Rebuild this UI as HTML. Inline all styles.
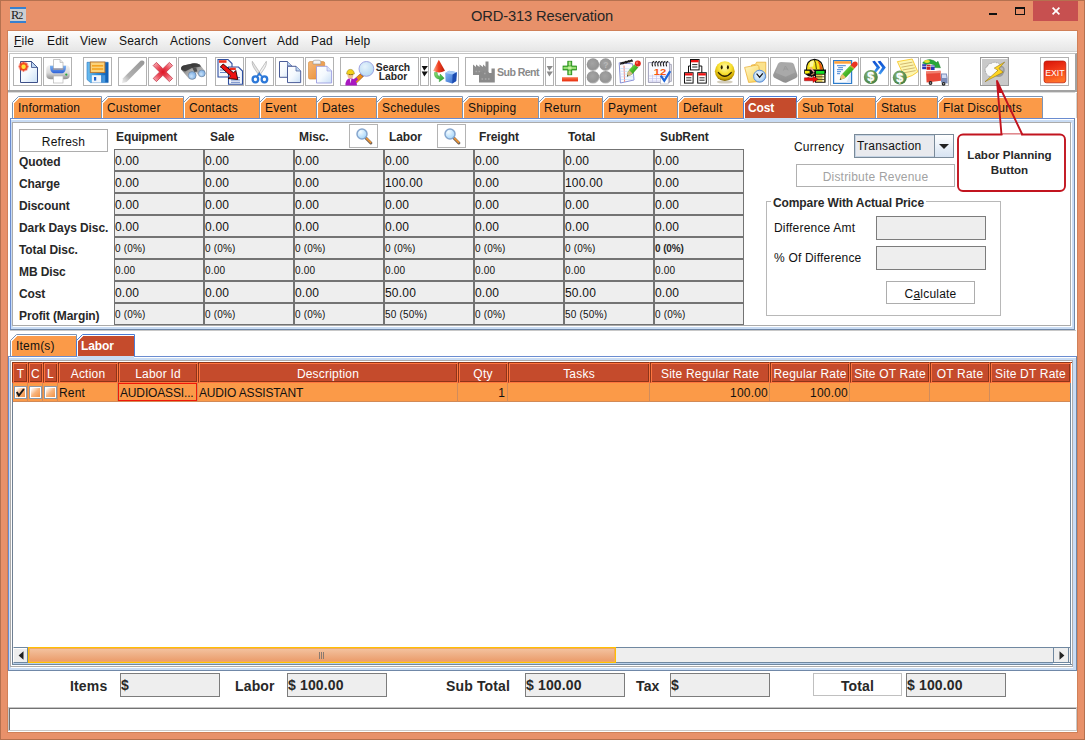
<!DOCTYPE html><html><head><meta charset="utf-8"><title>ORD-313 Reservation</title><style>
*{box-sizing:border-box;margin:0;padding:0}
html,body{width:1085px;height:740px;overflow:hidden}
body{position:relative;background:#E8916A;font-family:"Liberation Sans",sans-serif;font-size:12px;color:#111}
.a{position:absolute}
.t{position:absolute;white-space:nowrap;line-height:14px;letter-spacing:0.2px}
.t.b,.b{font-weight:bold;letter-spacing:-0.1px;color:#282828}
.tb{position:absolute;width:29px;height:29px;border:1px solid #B2B2B2;background:#fff;top:57px}
.cell{position:absolute;background:#EEEEEE;border:1px solid #737373;width:90px;height:22px}
.fld{position:absolute;background:#EEEEEE;border:1px solid #7C7C7C}
.hd{position:absolute;top:362px;height:21px;background:#C54B2C;color:#fff;text-align:center;line-height:14px;padding-top:4px;border:1px solid;border-color:#8E3519 #FF7640 #FF7640 #8E3519;box-shadow:inset 1px 1px 0 #FF7640, inset -1px -1px 0 #8E3519;white-space:nowrap;overflow:hidden;letter-spacing:0.2px}
</style></head><body>
<div class="a" style="left:0;top:0;width:1085px;height:740px;border:1px solid #B5714F"></div>
<div class="a" style="left:10px;top:7px;width:16px;height:16px;background:#CBCED2;border-top:2px solid #3680D0;border-bottom:2px solid #3680D0"></div>
<div class="t" style="left:11px;top:8px;font-family:'Liberation Serif',serif;font-size:12.5px;line-height:14px;color:#1a1a1a;letter-spacing:0">R<span style="font-size:10px;position:relative;top:0px;margin-left:-1px">2</span></div>
<div class="t" style="left:471px;top:6px;font-size:14.7px;line-height:20px;color:#262626;letter-spacing:-0.13px">ORD-313 Reservation</div>
<div class="a" style="left:989px;top:13px;width:8px;height:2px;background:#111"></div>
<div class="a" style="left:1015px;top:7px;width:10px;height:8px;border:1px solid #111;border-top-width:2px"></div>
<div class="a" style="left:1033px;top:1px;width:45px;height:20px;background:#C75050"></div>
<svg class="a" style="left:1051px;top:6px" width="10" height="10" viewBox="0 0 10 10"><path d="M1.6 1.6 L8.4 8.4 M8.4 1.6 L1.6 8.4" stroke="#fff" stroke-width="1.7" fill="none"/></svg>
<div class="a" style="left:7px;top:30px;width:1071px;height:703px;background:#fff;border:1px solid #D08058"></div>
<div class="a" style="left:8px;top:31px;width:1069px;height:21px;background:linear-gradient(#fdfdfd,#e6e6e6);border-bottom:1px solid #d0d0d0"></div>
<div class="t" style="left:14px;top:34px;font-size:12px"><u>F</u>ile</div>
<div class="t" style="left:47px;top:34px;font-size:12px">Edit</div>
<div class="t" style="left:80px;top:34px;font-size:12px">View</div>
<div class="t" style="left:119px;top:34px;font-size:12px">Search</div>
<div class="t" style="left:170px;top:34px;font-size:12px">Actions</div>
<div class="t" style="left:223px;top:34px;font-size:12px">Convert</div>
<div class="t" style="left:277px;top:34px;font-size:12px">Add</div>
<div class="t" style="left:311px;top:34px;font-size:12px">Pad</div>
<div class="t" style="left:345px;top:34px;font-size:12px">Help</div>
<div class="a" style="left:9px;top:53px;width:1068px;height:39px;border:1px solid #C4C4C4;border-bottom:2px solid #A2A2A2;border-right:2px solid #A2A2A2;background:#fff"></div>
<div class="a" style="left:8px;top:90px;width:2px;height:1px;background:#A2A2A2"></div>
<div class="a" style="left:8px;top:91px;width:2px;height:1px;background:#A2A2A2"></div>
<div class="a" style="left:8px;top:92px;width:1067px;height:1px;background:#DADADA"></div>
<div class="a" style="left:1076px;top:93px;width:1px;height:25px;background:#D4D4D4"></div>
<div class="tb" style="left:13px;width:29px"></div>
<div class="tb" style="left:43px;width:29px"></div>
<div class="tb" style="left:83px;width:29px"></div>
<div class="tb" style="left:118px;width:29px"></div>
<div class="tb" style="left:148px;width:29px"></div>
<div class="tb" style="left:178px;width:29px"></div>
<div class="tb" style="left:215px;width:29px"></div>
<div class="tb" style="left:245px;width:29px"></div>
<div class="tb" style="left:275px;width:29px"></div>
<div class="tb" style="left:305px;width:29px"></div>
<div class="tb" style="left:340px;width:79px"></div>
<div class="tb" style="left:420px;width:9px"></div>
<div class="tb" style="left:430px;width:29px"></div>
<div class="tb" style="left:465px;width:79px"></div>
<div class="tb" style="left:545px;width:9px"></div>
<div class="tb" style="left:555px;width:29px"></div>
<div class="tb" style="left:585px;width:29px"></div>
<div class="tb" style="left:615px;width:29px"></div>
<div class="tb" style="left:645px;width:29px"></div>
<div class="tb" style="left:680px;width:29px"></div>
<div class="tb" style="left:710px;width:29px"></div>
<div class="tb" style="left:740px;width:29px"></div>
<div class="tb" style="left:770px;width:29px"></div>
<div class="tb" style="left:800px;width:29px"></div>
<div class="tb" style="left:830px;width:29px"></div>
<div class="tb" style="left:860px;width:29px"></div>
<div class="tb" style="left:890px;width:29px"></div>
<div class="tb" style="left:920px;width:29px"></div>
<div class="tb" style="left:1040px;width:29px"></div>
<div class="tb" style="left:980px;background:#C9C9C9;border-color:#9A9A9A"></div>
<svg width="0" height="0" style="position:absolute"><defs>
<linearGradient id="gpage" x1="0" y1="0" x2="1" y2="1"><stop offset="0" stop-color="#fff"/><stop offset="0.5" stop-color="#F4F9FE"/><stop offset="1" stop-color="#C9DFF6"/></linearGradient>
<radialGradient id="gsun"><stop offset="0" stop-color="#FFF36A"/><stop offset="0.35" stop-color="#FFC21E"/><stop offset="0.6" stop-color="#F2452A"/><stop offset="1" stop-color="#F2452A" stop-opacity="0"/></radialGradient>
<linearGradient id="gprn" x1="0" y1="0" x2="0" y2="1"><stop offset="0" stop-color="#F4F4F4"/><stop offset="0.55" stop-color="#D9D9D9"/><stop offset="1" stop-color="#8E8E8E"/></linearGradient>
<linearGradient id="gprb" x1="0" y1="0" x2="0" y2="1"><stop offset="0" stop-color="#7DB4F2"/><stop offset="1" stop-color="#2F62D8"/></linearGradient>
<linearGradient id="gflop" x1="0" y1="0" x2="1" y2="0"><stop offset="0" stop-color="#6FC0F0"/><stop offset="0.5" stop-color="#2A8AD8"/><stop offset="1" stop-color="#0F5CB0"/></linearGradient>
<linearGradient id="gpen" x1="0" y1="1" x2="1" y2="0"><stop offset="0" stop-color="#C8C8C8" stop-opacity="0.3"/><stop offset="0.3" stop-color="#B0B0B0"/><stop offset="1" stop-color="#969696"/></linearGradient>
<radialGradient id="gx" cx="0.5" cy="0.5" r="0.6"><stop offset="0" stop-color="#DC1424"/><stop offset="0.5" stop-color="#EC4C5A"/><stop offset="1" stop-color="#F6A4AC"/></radialGradient>
<radialGradient id="glens" cx="0.4" cy="0.6" r="0.7"><stop offset="0" stop-color="#C8E2FA"/><stop offset="1" stop-color="#6FA4E0"/></radialGradient>
<linearGradient id="gbino" x1="0" y1="0" x2="1" y2="1"><stop offset="0" stop-color="#484848"/><stop offset="0.45" stop-color="#A0A0A0"/><stop offset="1" stop-color="#E4E4E4"/></linearGradient>
<linearGradient id="gclip" x1="0" y1="0" x2="1" y2="1"><stop offset="0" stop-color="#F6B878"/><stop offset="1" stop-color="#E88A30"/></linearGradient>
<radialGradient id="gring"><stop offset="0.45" stop-color="#fff" stop-opacity="0"/><stop offset="0.5" stop-color="#5FA4EC"/><stop offset="1" stop-color="#1C62C4"/></radialGradient>
</defs></svg>
<svg class="a" style="left:13px;top:57px" width="29" height="29" viewBox="13 57 29 29">
<path d="M20.5 61.5 H31.5 L37.5 67.5 V82.5 H20.5 Z" fill="url(#gpage)" stroke="#3C4F88" stroke-width="1"/>
<path d="M31.5 61.5 V67.5 H37.5 Z" fill="#BCD6F2" stroke="#3C4F88" stroke-width="0.8"/>
<circle cx="23.5" cy="66.5" r="5.6" fill="url(#gsun)"/>
<path d="M23.6 61.4 L24.6 64.4 L27.6 63 L26 65.8 L29 66.8 L26 67.8 L27.4 70.6 L24.6 69.2 L23.6 72.2 L22.6 69.2 L19.8 70.6 L21.2 67.8 L18.2 66.8 L21.2 65.8 L19.6 63 L22.6 64.4 Z" fill="#F0401C" opacity="0.85"/>
<circle cx="23.6" cy="66.8" r="2.2" fill="#FFE23C"/>
</svg>
<svg class="a" style="left:43px;top:57px" width="29" height="29" viewBox="43 57 29 29">
<path d="M46.3 69 Q46.3 65 51 65 H65 Q69.8 65 69.8 69 V75 Q69.8 79.3 65 79.3 H51 Q46.3 79.3 46.3 75 Z" fill="url(#gprn)"/>
<path d="M50 65.8 H66 Q66 73 62.5 73.2 H53.5 Q50 73 50 65.8 Z" fill="url(#gprb)"/>
<path d="M53.5 59.5 H60 L63 62.5 V69.5 H53.5 Z" fill="#fff" stroke="#B0B0B0" stroke-width="0.7"/>
<path d="M60 59.5 V62.5 H63" fill="#E8E8E8" stroke="#B0B0B0" stroke-width="0.6"/>
<rect x="53" y="68.3" width="10.5" height="1.4" fill="#8A8AA0"/>
<rect x="53.5" y="76" width="9.5" height="7" fill="#fff" stroke="#B8B8B8" stroke-width="0.7"/>
<circle cx="66.3" cy="74.6" r="1.1" fill="#24A83C"/>
</svg>
<svg class="a" style="left:83px;top:57px" width="29" height="29" viewBox="83 57 29 29">
<path d="M87 62.3 H108.2 V82.6 H90.5 L87 79.5 Z" fill="url(#gflop)" stroke="#1E6EC0" stroke-width="0.6"/>
<rect x="90.3" y="62" width="14.6" height="10.6" fill="#FBD27A" stroke="#B8742C" stroke-width="0.9"/>
<rect x="92" y="65" width="11.2" height="1.6" fill="#F4A320"/>
<rect x="92" y="68.2" width="11.2" height="1.6" fill="#F4A320"/>
<rect x="91.8" y="75.2" width="9.4" height="7.4" fill="#F2F6FB"/>
<rect x="94" y="77" width="2.2" height="3.6" fill="#1E5FC8"/>
<rect x="102.2" y="75.2" width="3" height="7.4" fill="#58A8E8" opacity="0.7"/>
</svg>
<svg class="a" style="left:118px;top:57px" width="29" height="29" viewBox="118 57 29 29">
<path d="M122 83.2 L123 78.2 L140.6 60.8 Q142.8 59.8 144.2 61.6 Q145 63.2 143.8 64.6 L126.6 82 Z" fill="url(#gpen)"/>
</svg>
<svg class="a" style="left:148px;top:57px" width="29" height="29" viewBox="148 57 29 29">
<path d="M156.4 62.4 L162.9 68.7 L169.4 62.4 L172.6 65.6 L166.2 72 L172.6 78.4 L169.4 81.6 L162.9 75.3 L156.4 81.6 L153.2 78.4 L159.6 72 L153.2 65.6 Z" fill="url(#gx)" stroke="#C43444" stroke-width="0.8" stroke-linejoin="round"/>
</svg>
<svg class="a" style="left:178px;top:57px" width="29" height="29" viewBox="178 57 29 29">
<path d="M181.2 69.5 Q180.6 66.6 183.6 65.6 L190 64 Q192.4 64 193.6 66 L196.4 74 Q196.8 79.6 192.4 79.8 Q189 80 187.4 77 Z" fill="url(#gbino)"/>
<path d="M190 64.6 Q193 62.8 197 63.6 L199.6 64.6 L205 71 Q206.4 75.6 203 76.8 Q199.4 77.6 197.8 74.6 Z" fill="url(#gbino)"/>
<path d="M181.2 69.5 Q180.6 66.6 183.6 65.6 L190 64 Q193 62.8 197 63.6 L199.6 64.6 L201 66.4 L192 68 L185 71.6 Z" fill="#303030" opacity="0.8"/>
<path d="M192.4 68.2 L196.2 67.4 L197.4 71.4 L194.4 72 Z" fill="#505050"/>
<circle cx="192.2" cy="75.4" r="3.9" fill="url(#glens)" stroke="#6A7A90" stroke-width="0.6"/>
<circle cx="201.8" cy="73.4" r="3.4" fill="url(#glens)" stroke="#6A7A90" stroke-width="0.6"/>
</svg>
<svg class="a" style="left:215px;top:57px" width="29" height="29" viewBox="215 57 29 29">
<path d="M218 59.5 H228 L232 63.5 V77 H218 Z" fill="#F4F8FE" stroke="#2F4FA0" stroke-width="1.1"/>
<rect x="219" y="60.2" width="7.5" height="2.6" fill="#F0301C"/>
<path d="M220 67.5 H229 M220 70 H229 M220 72.5 H226" stroke="#5A78C0" stroke-width="0.9"/>
<path d="M228.5 67 H238.5 L242.5 71 V84.2 H228.5 Z" fill="#F4F8FE" stroke="#2F4FA0" stroke-width="1.1"/>
<rect x="229.3" y="67.7" width="6.5" height="2.4" fill="#F0301C"/>
<path d="M231 77.5 H240 M231 80 H240 M231 82.3 H240" stroke="#5A78C0" stroke-width="0.9"/>
<path d="M220.5 66.8 L223.2 64 L233.5 72.8 L235.8 70.5 L237.8 79.5 L228 78.5 L230.6 76 Z" fill="#EE1010" stroke="#200000" stroke-width="0.9" stroke-linejoin="round"/>
</svg>
<svg class="a" style="left:245px;top:57px" width="29" height="29" viewBox="245 57 29 29">
<path d="M252.3 61.3 Q251.5 65 256 71 L259.5 76 L261 74.5 Z" fill="#E4E4E4" stroke="#A0A0A0" stroke-width="0.6"/>
<path d="M266.3 61.3 Q267.2 65 262.7 71 L259.2 76 L257.7 74.5 Z" fill="#F2F2F2" stroke="#A0A0A0" stroke-width="0.6"/>
<circle cx="259.4" cy="73" r="0.8" fill="#707070"/>
<ellipse cx="255.4" cy="79.3" rx="2.8" ry="3" fill="none" stroke="#2C78D8" stroke-width="2.3"/>
<ellipse cx="264.4" cy="79.3" rx="2.8" ry="3" fill="none" stroke="#2C78D8" stroke-width="2.3"/>
<path d="M257 76.5 L259.3 73.5 L261.8 76.5" fill="none" stroke="#2C78D8" stroke-width="1.6"/>
</svg>
<svg class="a" style="left:275px;top:57px" width="29" height="29" viewBox="275 57 29 29">
<path d="M279.5 61.5 H287.5 L292 66 V77.3 H279.5 Z" fill="url(#gpage)" stroke="#4A5C98" stroke-width="1"/>
<path d="M287.5 61.5 V66 H292" fill="#BCD6F2" stroke="#4A5C98" stroke-width="0.7"/>
<path d="M287.5 66.3 H296 L300.7 71 V82.6 H287.5 Z" fill="url(#gpage)" stroke="#4A5C98" stroke-width="1"/>
<path d="M296 66.3 V71 H300.7" fill="#BCD6F2" stroke="#4A5C98" stroke-width="0.7"/>
</svg>
<svg class="a" style="left:305px;top:57px" width="29" height="29" viewBox="305 57 29 29">
<rect x="308.5" y="61.6" width="16.2" height="17.5" rx="1.5" fill="url(#gclip)" stroke="#D08838" stroke-width="0.6"/>
<path d="M313 64 V61.8 Q313 60.2 315 60.2 H319 Q320.8 60.2 320.8 61.8 V64 Z" fill="#F4F4F4" stroke="#909090" stroke-width="0.6"/>
<path d="M316.5 66.3 H327 L331.6 71 V83 H316.5 Z" fill="url(#gpage)" stroke="#9A9CE0" stroke-width="0.9"/>
<path d="M327 66.3 V71 H331.6" fill="#D8E4FA" stroke="#9A9CE0" stroke-width="0.6"/>
</svg><svg width="0" height="0" style="position:absolute"><defs>
<radialGradient id="gmag" cx="0.4" cy="0.35" r="0.7"><stop offset="0" stop-color="#E6F3FC"/><stop offset="1" stop-color="#B4D8F2"/></radialGradient>
<linearGradient id="gcone" x1="0" y1="0" x2="1" y2="0"><stop offset="0" stop-color="#FFB090"/><stop offset="0.45" stop-color="#F04020"/><stop offset="1" stop-color="#B81808"/></linearGradient>
<linearGradient id="gcube" x1="0" y1="0" x2="1" y2="1"><stop offset="0" stop-color="#8CBCF4"/><stop offset="1" stop-color="#2C64CC"/></linearGradient>
<linearGradient id="ggrn" x1="0" y1="0" x2="1" y2="1"><stop offset="0" stop-color="#8CE070"/><stop offset="1" stop-color="#1C9C28"/></linearGradient>
<linearGradient id="gplus" x1="0" y1="0" x2="0" y2="1"><stop offset="0" stop-color="#3CA828"/><stop offset="0.5" stop-color="#B8F090"/><stop offset="1" stop-color="#2C9820"/></linearGradient>
<linearGradient id="gplusv" x1="0" y1="0" x2="1" y2="0"><stop offset="0" stop-color="#3CA828"/><stop offset="0.5" stop-color="#C8F8A0"/><stop offset="1" stop-color="#2C9820"/></linearGradient>
<linearGradient id="gminus" x1="0" y1="0" x2="0" y2="1"><stop offset="0" stop-color="#F87850"/><stop offset="1" stop-color="#E82808"/></linearGradient>
<radialGradient id="gball" cx="0.45" cy="0.4" r="0.6"><stop offset="0" stop-color="#A4A4A4"/><stop offset="0.8" stop-color="#949494"/><stop offset="1" stop-color="#BDBDBD"/></radialGradient>
<linearGradient id="gpencil" x1="0" y1="0" x2="1" y2="1"><stop offset="0" stop-color="#A8F070"/><stop offset="0.5" stop-color="#48B828"/><stop offset="1" stop-color="#1C7C10"/></linearGradient>
<radialGradient id="gsmile" cx="0.5" cy="0.3" r="0.75"><stop offset="0" stop-color="#FFFBB0"/><stop offset="0.45" stop-color="#F8E030"/><stop offset="0.78" stop-color="#CCA400"/><stop offset="1" stop-color="#4C3C00"/></radialGradient>
<linearGradient id="gfold" x1="0" y1="0" x2="1" y2="1"><stop offset="0" stop-color="#FFF8C8"/><stop offset="1" stop-color="#F8D050"/></linearGradient>
<radialGradient id="gclock" cx="0.4" cy="0.4" r="0.7"><stop offset="0" stop-color="#F0F8FF"/><stop offset="0.7" stop-color="#B8D8F4"/><stop offset="1" stop-color="#6C9CD8"/></radialGradient>
<linearGradient id="gkey" x1="0" y1="0" x2="0" y2="1"><stop offset="0" stop-color="#ACACAC"/><stop offset="1" stop-color="#8E8E8E"/></linearGradient>
<radialGradient id="gdollar" cx="0.4" cy="0.35" r="0.75"><stop offset="0" stop-color="#8CB880"/><stop offset="1" stop-color="#3C7838"/></radialGradient>
<linearGradient id="gchev" x1="0" y1="0" x2="0" y2="1"><stop offset="0" stop-color="#0C4CD0"/><stop offset="0.55" stop-color="#2070E0"/><stop offset="1" stop-color="#4CA4F4"/></linearGradient>
<linearGradient id="gexit" x1="0" y1="0" x2="0.3" y2="1"><stop offset="0" stop-color="#D81408"/><stop offset="0.5" stop-color="#F03818"/><stop offset="1" stop-color="#FF7028"/></linearGradient>
<linearGradient id="gbolt" x1="0" y1="0" x2="1" y2="1"><stop offset="0" stop-color="#FFF080"/><stop offset="1" stop-color="#E8A800"/></linearGradient>
</defs></svg>
<svg class="a" style="left:340px;top:57px" width="79" height="29" viewBox="340 57 79 29">
<path d="M360.6 73.6 L363.4 76.4 L357 82.6 Q355 83.6 353.6 82.2 Q352.6 80.6 354 79.4 Z" fill="#F08A18" stroke="#7A4A18" stroke-width="0.5"/>
<path d="M361 73.6 L363.6 76.2" stroke="#505050" stroke-width="1.8"/>
<circle cx="366.4" cy="68.9" r="7.4" fill="url(#gmag)" stroke="#989CE0" stroke-width="0.9"/>
<path d="M345.4 85.5 Q345.4 78.6 350.4 78.2 Q356.4 78.6 357 85.5 Z" fill="#A818C0"/>
<path d="M353.6 79.6 L356.4 77.6 L358 79.6 L355.4 82 Z" fill="#A818C0"/>
<ellipse cx="350.4" cy="75.6" rx="2.9" ry="3" fill="#F2C090"/>
<path d="M346.6 74 Q346.8 69.6 350.4 69.4 Q354 69.6 354.4 74 Q350.4 75.4 346.6 74 Z" fill="#F4D018" stroke="#907810" stroke-width="0.5"/>
<path d="M349.4 74.6 h0.9 M351.6 74.6 h0.9" stroke="#222" stroke-width="0.8"/>
<path d="M349.8 79 L350.6 83.4 L351.4 79" fill="#F0F0F0"/>
</svg>
<div class="t b" style="left:370px;top:63px;width:46px;text-align:center;font-size:10.3px;line-height:9px;letter-spacing:0">Search<br>Labor</div>
<svg class="a" style="left:420px;top:57px" width="9" height="29" viewBox="420 57 9 29"><path d="M421.7 66 H427.9 L424.3 70.8 Z M421.7 71.6 H427.9 L424.3 76.4 Z" fill="#111"/></svg>
<svg class="a" style="left:430px;top:57px" width="29" height="29" viewBox="430 57 29 29">
<path d="M438.8 59.8 L445 70.8 Q439 74 433.2 70.8 Z" fill="url(#gcone)"/>
<path d="M434.5 72.5 Q433.8 78.5 439.5 79.2 L439.2 81.8 L444.2 78.2 L440.2 74 L439.9 76.4 Q437 76.2 437.2 72.5 Z" fill="url(#ggrn)" stroke="#1C8C28" stroke-width="0.4"/>
<path d="M445.2 73 L449 70.8 L456.8 72.2 L456.2 81 L452.2 83.4 L445.6 81.6 Z" fill="url(#gcube)"/>
<path d="M445.2 73 L449 70.8 L456.8 72.2 L452.6 74.4 Z" fill="#A8CCF8"/>
<path d="M452.6 74.4 L456.8 72.2 L456.2 81 L452.2 83.4 Z" fill="#1C4CB0"/>
</svg>
<svg class="a" style="left:465px;top:57px" width="79" height="29" viewBox="465 57 79 29">
<path d="M473 75 V64.5 L476 67 V64.5 L479.5 67 V64.5 L483 67 V64.5 L485.5 66.8 V61.5 H488.5 V75 Z" fill="#8E8E8E"/>
<path d="M479 82.6 V70.5 L482.5 73 V70.5 L486 73 V70.5 L489.5 73 L491.5 73 V68.5 H494.8 V82.6 Z" fill="#8A8A8A"/>
<path d="M475.5 71.5 h1.6 M478.5 71.5 h1.6 M481.5 79 h1.6 M484.8 79 h1.6 M488 79 h1.6 M484 73.5 h1.6" stroke="#A8A8A8" stroke-width="1.4"/>
</svg>
<div class="t b" style="left:497px;top:66px;font-size:10.6px;line-height:12px;letter-spacing:-0.58px;color:#8A8A8A">Sub Rent</div>
<svg class="a" style="left:545px;top:57px" width="9" height="29" viewBox="545 57 9 29"><path d="M546.7 66 H552.9 L549.3 70.8 Z M546.7 71.6 H552.9 L549.3 76.4 Z" fill="#8A8A8A"/></svg>
<svg class="a" style="left:555px;top:57px" width="29" height="29" viewBox="555 57 29 29">
<rect x="567.8" y="61.2" width="4" height="13.6" fill="url(#gplusv)" stroke="#1C8810" stroke-width="0.7"/>
<rect x="563" y="66" width="13.6" height="4" fill="url(#gplus)" stroke="#1C8810" stroke-width="0.7"/>
<rect x="568.2" y="66.4" width="3.2" height="3.2" fill="#C4F49C"/>
<rect x="562" y="77.2" width="16" height="4.2" fill="url(#gminus)"/>
</svg>
<svg class="a" style="left:585px;top:57px" width="29" height="29" viewBox="585 57 29 29">
<circle cx="593" cy="64.6" r="6.3" fill="url(#gball)"/><circle cx="605.6" cy="64.6" r="6.3" fill="url(#gball)"/>
<circle cx="593" cy="77.2" r="6.3" fill="url(#gball)"/><circle cx="605.6" cy="77.2" r="6.3" fill="url(#gball)"/>
<text x="603.2" y="68" font-family="Liberation Sans,sans-serif" font-size="8.5" font-weight="bold" fill="#B8B8B8">?</text>
</svg>
<svg class="a" style="left:615px;top:57px" width="29" height="29" viewBox="615 57 29 29">
<path d="M619.2 62.8 L632.6 63.8 L634 80 L620.4 83 Z" fill="#FBFCFF" stroke="#7C84D0" stroke-width="0.9"/>
<path d="M624 65.6 L624.6 81.8" stroke="#F07868" stroke-width="0.9"/>
<path d="M620.4 68.5 L633 69 M620.6 71.2 L633.2 71.6 M620.8 74 L633.4 74.2 M621 76.8 L633.6 76.8 M621.2 79.6 L633.8 79.2" stroke="#B4D4F8" stroke-width="0.6"/>
<path d="M620.6 64.8 q0.2 -4.2 1.5 -0.4 q0.2 -4.2 1.5 -0.4 q0.2 -4.2 1.5 -0.4 q0.2 -4.2 1.5 -0.4 q0.2 -4.2 1.5 -0.4 q0.2 -4.2 1.5 -0.4 q0.2 -4.2 1.5 -0.4 q0.2 -4.2 1.5 -0.4" fill="none" stroke="#181818" stroke-width="1.1"/>
<path d="M627 76.6 L627.6 72.4 L629.4 69.6 L634.6 64 L638.4 67.2 L633.2 73.2 L630.6 75.2 Z" fill="url(#gpencil)"/>
<path d="M627 76.6 L627.6 72.4 L629.2 70.2 L632.6 73.4 L630.6 75.2 Z" fill="#D8B888"/><path d="M627 76.6 L627.3 74.8 L628.6 75.9 Z" fill="#303030"/>
<path d="M634.2 64.4 L635.6 63 L639.6 66.2 L638.4 67.4 Z" fill="#E8E8E8"/>
<circle cx="637.8" cy="63.6" r="3" fill="#E02818"/><circle cx="637" cy="62.8" r="1.2" fill="#F87060"/>
</svg>
<svg class="a" style="left:645px;top:57px" width="29" height="29" viewBox="645 57 29 29">
<path d="M658 64.4 H671.4 V81.4 H658 Z" fill="#E8E8F0" stroke="#9090A8" stroke-width="0.7"/>
<path d="M648.4 62.6 H669.6 V82.4 H648.4 Z" fill="#FAFAFF" stroke="#8888A8" stroke-width="0.8"/>
<path d="M649 76 H669 M649 78.6 H669 M649 81 H669 M652.5 74.6 V82 M656.5 74.6 V82 M660.5 74.6 V82" stroke="#C4C4EC" stroke-width="0.7"/>
<rect x="660.4" y="76.4" width="7.8" height="7.6" fill="#fff" stroke="#A8A8B8" stroke-width="0.6"/>
<path d="M652.6 66.4 q-1.4 -4.4 1.6 -5.2 M655.4 66.4 q-1.4 -4.4 1.6 -5.2 M658.2 66.4 q-1.4 -4.4 1.6 -5.2 M661 66.4 q-1.4 -4.4 1.6 -5.2 M663.8 66.4 q-1.4 -4.4 1.6 -5.2 M666.6 66.4 q-1.4 -4.4 1.6 -5.2" fill="none" stroke="#202020" stroke-width="1.1"/>
<text x="653.8" y="75.1" font-family="Liberation Sans,sans-serif" font-size="9.8" font-weight="bold" fill="#F85810" textLength="12.6" lengthAdjust="spacingAndGlyphs">12</text>
<path d="M660.8 75.6 L664.3 80.8 L670.2 71.2" fill="none" stroke="#1C64D8" stroke-width="2.2"/>
</svg>
<svg class="a" style="left:680px;top:57px" width="29" height="29" viewBox="680 57 29 29">
<path d="M688.5 73 V66 H701.8 V73" fill="none" stroke="#111" stroke-width="1"/>
<g stroke="#111" stroke-width="1"><rect x="690.5" y="59.5" width="8.6" height="10.4" fill="#fff"/><rect x="684.5" y="72.7" width="8.6" height="10.4" fill="#fff"/><rect x="697.7" y="72.7" width="8.6" height="10.4" fill="#fff"/></g>
<rect x="691" y="60" width="7.6" height="2.3" fill="#F01010"/><rect x="685" y="73.2" width="7.6" height="2.3" fill="#F01010"/><rect x="698.2" y="73.2" width="7.6" height="2.3" fill="#F01010"/>
<path d="M692.2 64.6 h5.2 M692.2 67 h5.2 M686.2 77.8 h5.2 M686.2 80.2 h5.2 M699.4 77.8 h5.2 M699.4 80.2 h5.2" stroke="#111" stroke-width="0.9"/>
</svg>
<svg class="a" style="left:710px;top:57px" width="29" height="29" viewBox="710 57 29 29">
<ellipse cx="724.8" cy="82" rx="8" ry="1.6" fill="#807040" opacity="0.35"/>
<circle cx="724.8" cy="71.2" r="9.9" fill="url(#gsmile)"/>
<ellipse cx="721.7" cy="67.3" rx="1" ry="2.1" fill="#2C2000"/><ellipse cx="727.9" cy="67.3" rx="1" ry="2.1" fill="#2C2000"/>
<path d="M718.4 72.6 Q724.8 80 731.2 72.6" fill="none" stroke="#2C2000" stroke-width="1.4" stroke-linecap="round"/>
</svg>
<svg class="a" style="left:740px;top:57px" width="29" height="29" viewBox="740 57 29 29">
<path d="M751.6 78 V65 L755.4 64.4 L756.6 62.2 H765.8 V78 Z" fill="#FBE28C" stroke="#E8A828" stroke-width="0.7"/>
<path d="M744.6 67.4 L756.8 65 Q758.4 65 758.8 66.4 L761 81.4 L748.6 82.4 Z" fill="url(#gfold)" stroke="#E8A828" stroke-width="0.7"/>
<circle cx="759.6" cy="76.2" r="6" fill="url(#gclock)" stroke="#5C90D8" stroke-width="1"/>
<path d="M756.6 73.6 L759.6 77.2 L762.8 73.4" fill="none" stroke="#111" stroke-width="1.2"/>
</svg>
<svg class="a" style="left:770px;top:57px" width="29" height="29" viewBox="770 57 29 29">
<path d="M778 63.8 Q779 62 781 62 L791 62.4 Q793.4 62.6 794 64.4 L797.4 75 Q797.8 77 796 78 L786.6 82.4 Q785 83 783.4 82.2 L774 77.4 Q772.6 76.4 773.2 74.6 Z" fill="url(#gkey)"/>
<path d="M779 64.4 Q779.6 63 781.4 63 L790.6 63.4 Q792.4 63.6 793 65 L795 72.6 L785.6 76.8 L775.6 72.8 Z" fill="#A9A9A9"/>
<path d="M783.4 70.6 l2 -4.6 l2.8 4.4 M784.2 69 h3.2" stroke="#9A9A9A" stroke-width="0.9" fill="none"/>
</svg>
<svg class="a" style="left:800px;top:57px" width="29" height="29" viewBox="800 57 29 29">
<path d="M806.4 70.4 Q806 60 814.6 59.4 Q822.6 59.8 823.6 70.6 Z" fill="#F6E21C" stroke="#0C0C0C" stroke-width="1.1"/>
<path d="M810 62 Q812 60.2 814 60.4 L813.2 66.4 L809.4 67 Z" fill="#FDF6A0"/>
<path d="M817.6 60.8 Q821.6 62.6 822.6 69.8 L819.8 69.6 Q819.6 64 817.6 60.8 Z" fill="#E8520E"/>
<path d="M814.4 60 Q816 62.6 816.4 69" fill="none" stroke="#1C1400" stroke-width="0.8"/>
<path d="M804.2 69.6 H826 V73.2 H816 V76 H808 L804.2 73.6 Z" fill="#0C0C0C"/>
<rect x="805" y="70.8" width="4.6" height="2.8" fill="#F4EA10"/>
<path d="M810.4 67.4 L814.2 72.2" stroke="#F4A0A0" stroke-width="1.5"/>
<path d="M814.2 73 L807.6 78" stroke="#B88058" stroke-width="1.1"/>
<path d="M808 74 L812.4 76.6" stroke="#0C0C0C" stroke-width="1.6"/>
<rect x="815" y="70" width="10.6" height="12.8" rx="0.6" fill="#0C0C0C"/>
<rect x="816" y="71" width="8.4" height="2.8" fill="#14E028"/>
<rect x="816" y="74.6" width="8.4" height="7.2" fill="#E4CC58"/>
<path d="M816 76.8 h8.4 M816 79.4 h8.4" stroke="#0C0C0C" stroke-width="0.7"/>
<path d="M822.4 75 h1.6 v1.2 h-1.6 z M822.4 77.6 h1.6 v1.2 h-1.6 z M822.4 80.2 h1.6 v1.2 h-1.6 z" fill="#fff"/>
<path d="M804.4 77.8 H813 V76 L818.2 79.3 L813 82.6 V80.8 H804.4 Z" fill="#F40C0C" stroke="#600000" stroke-width="0.4"/>
</svg>
<svg class="a" style="left:830px;top:57px" width="29" height="29" viewBox="830 57 29 29">
<rect x="833.6" y="60.6" width="18" height="22.8" fill="#FAFCFF" stroke="#2C7CCC" stroke-width="1.2"/>
<path d="M846 83 L851 83 L851 72 Z" fill="#DCE8F8"/>
<rect x="834.2" y="61.2" width="16.8" height="2.5" fill="#FFA23C"/>
<path d="M837 65.7 h8.8 M838.2 67.7 h4.8 M837 69.7 h6 M837 71.7 h4 M837 73.7 h3" stroke="#2C78D0" stroke-width="0.9"/>
<path d="M839.8 79.8 L840.8 76 L842.6 73.6 L850.6 65 L854.4 68.4 L846.4 77 L843.8 78.8 Z" fill="url(#gpencil)"/>
<path d="M839.8 79.8 L840.8 76 L842.4 74 L845.8 77.2 L843.8 78.8 Z" fill="#ECC070"/><path d="M839.8 79.8 L840.2 78.2 L841.4 79.2 Z" fill="#101010"/>
<path d="M850.6 65 L853.4 62 Q855.8 60.8 857.4 62.8 Q858.2 64.4 857.2 65.6 L854.4 68.4 Z" fill="#EC3420"/>
<path d="M850 65.6 L853.8 69" stroke="#E8B828" stroke-width="1"/>
</svg>
<svg class="a" style="left:860px;top:57px" width="29" height="29" viewBox="860 57 29 29">
<path d="M872.2 61.6 L874.8 60.8 L880.2 67.6 L876 72.6 L873.6 71.8 L876.6 67.6 Z" fill="url(#gchev)"/>
<path d="M877.6 61.4 L880.4 60.8 L885.8 67.4 L880.6 74.6 L878.2 73.4 L882.2 67.4 Z" fill="url(#gchev)"/>
<circle cx="870.8" cy="77.0" r="7" fill="url(#gdollar)"/><text x="870.8" y="81.4" font-family="Liberation Sans,sans-serif" font-size="12.4" font-weight="bold" fill="#fff" stroke="#fff" stroke-width="0.35" text-anchor="middle">$</text></svg>
<svg class="a" style="left:890px;top:57px" width="29" height="29" viewBox="890 57 29 29">
<path d="M897.4 61.6 L912.2 59 L917.8 71.8 Q913 76 905 78.2 Z" fill="#FDF6B0" stroke="#F8C828" stroke-width="0.9"/>
<path d="M900.2 64.4 L912.4 62.2 M901.4 67.2 L913.6 65 M902.6 70 L914.8 67.8 M903.8 72.8 L915.6 70.6" stroke="#CCB068" stroke-width="0.9"/>
<circle cx="899.8" cy="77.6" r="7" fill="url(#gdollar)"/><text x="899.8" y="82.0" font-family="Liberation Sans,sans-serif" font-size="12.4" font-weight="bold" fill="#fff" stroke="#fff" stroke-width="0.35" text-anchor="middle">$</text></svg>
<svg class="a" style="left:920px;top:57px" width="29" height="29" viewBox="920 57 29 29">
<path d="M922.5 63 Q925 59.5 930 59.6 Q934 60 936.5 62.5 L938 61.2 L940.5 67.8 L933.5 67.5 L935 65.5 Q931 62.5 926 64.5 Z" fill="#28A838" stroke="#0C6C18" stroke-width="0.4"/>
<ellipse cx="927" cy="61.5" rx="3" ry="1.4" fill="#F0E030"/>
<rect x="922.2" y="64.2" width="4" height="5" fill="#2838B8"/><rect x="926.6" y="64.8" width="4" height="5" fill="#C82020"/><rect x="931" y="65.4" width="3.6" height="4.6" fill="#2838B8"/>
<path d="M922.2 66.4 h12.4" stroke="#E8E8F8" stroke-width="0.7"/>
<path d="M926 71.5 L940.5 70.8 L941 80.8 L926.6 82.6 Z" fill="#E84838"/>
<path d="M926 71.5 L940.5 70.8 L940.6 73 L926.1 73.8 Z" fill="#F08070"/>
<path d="M941 73.6 L946.8 73.6 L947.6 78 L947.6 83.4 L941 82.6 Z" fill="#7C8CB8"/>
<path d="M942 74.6 L946 74.6 L946.6 78 L942 78 Z" fill="#D0DCF4"/>
<circle cx="930.5" cy="83" r="1.9" fill="#202020"/><circle cx="943.6" cy="83.8" r="1.9" fill="#202020"/>
<circle cx="930.5" cy="83" r="0.8" fill="#B0B0B0"/><circle cx="943.6" cy="83.8" r="0.8" fill="#B0B0B0"/>
</svg>
<svg class="a" style="left:980px;top:57px" width="29" height="29" viewBox="980 57 29 29">
<path d="M981.5 85 V58.5 H1007.5" fill="none" stroke="#fff" stroke-width="1"/>
<path d="M985.4 71.4 Q984.4 67.6 987.6 66.4 Q987.8 63.6 991.4 63.4 Q994 61.6 996.6 62.8 Q999.6 62.6 999.4 66 L998 74 Q995 77.6 991.4 76.6 Q987 76.6 985.4 71.4 Z" fill="#FAFAFA" stroke="#555" stroke-width="0.45" stroke-dasharray="0.9 0.7"/>
<path d="M998.6 66 Q1003.6 64.6 1004.6 68.6 Q1005.4 71.4 1003.6 73.4 Q1002.6 76.8 998.6 77 Q996 77.2 995.4 75.4 Z" fill="#9C9C9C"/>
<path d="M1000 67.4 Q1002.6 66.8 1003.4 69 L1001 73 L998 74.6 Z" fill="#B8B8B8"/>
<path d="M1004.7 62 L994.2 68.1 L997.9 70.3 L985 81.7 L1003.2 72.2 L998.9 68.6 Z" fill="#FFD522" stroke="#7A5C00" stroke-width="0.45" stroke-linejoin="round"/>
</svg>
<svg class="a" style="left:1040px;top:57px" width="29" height="29" viewBox="1040 57 29 29">
<rect x="1044" y="61" width="21.8" height="21.8" rx="2.6" fill="url(#gexit)" stroke="#B81808" stroke-width="0.7"/>
<text x="1054.9" y="76.2" font-family="Liberation Sans,sans-serif" font-size="9.8" fill="#fff" text-anchor="middle" textLength="19.5" lengthAdjust="spacingAndGlyphs">EXIT</text>
</svg>
<div class="a" style="left:10px;top:118px;width:1065px;height:212px;background:#C9DCF4;border:1px solid;border-color:#6A8CD0 #7088A8 #7088A8 #6A8CD0"></div>
<div class="a" style="left:11px;top:119px;width:1063px;height:1px;background:#fff"></div>
<div class="a" style="left:12px;top:122px;width:1059px;height:204px;background:#fff;border:1px solid #ABABAB"></div>
<div class="a" style="left:1071px;top:326px;width:1px;height:1px;background:#fff"></div>
<div class="a" style="left:1071px;top:123px;width:1px;height:203px;background:#fff"></div>
<div class="a" style="left:13px;top:326px;width:1058px;height:1px;background:#fff"></div>
<div class="a" style="left:10px;top:330px;width:1066px;height:1px;background:#C8C8C8"></div>
<svg class="a" style="left:12px;top:96px" width="90" height="22" viewBox="0 0 90 22"><path d="M2 22 V7.2 L7.2 2 H89 V22 Z" fill="#FB9A48"/><path d="M1.5 22 V6.9 L6.9 1.5 H89.0" fill="none" stroke="#fff" stroke-width="1"/><path d="M0.5 22 V6.5 L6.5 0.5 H89.5 V22" fill="none" stroke="#7C94B4" stroke-width="1"/></svg>
<div class="t" style="left:18px;top:101px;">Information</div>
<svg class="a" style="left:101px;top:96px" width="83" height="22" viewBox="0 0 83 22"><path d="M2 22 V7.2 L7.2 2 H82 V22 Z" fill="#FB9A48"/><path d="M1.5 22 V6.9 L6.9 1.5 H82.0" fill="none" stroke="#fff" stroke-width="1"/><path d="M0.5 22 V6.5 L6.5 0.5 H82.5 V22" fill="none" stroke="#7C94B4" stroke-width="1"/></svg>
<div class="t" style="left:107px;top:101px;">Customer</div>
<svg class="a" style="left:183px;top:96px" width="77" height="22" viewBox="0 0 77 22"><path d="M2 22 V7.2 L7.2 2 H76 V22 Z" fill="#FB9A48"/><path d="M1.5 22 V6.9 L6.9 1.5 H76.0" fill="none" stroke="#fff" stroke-width="1"/><path d="M0.5 22 V6.5 L6.5 0.5 H76.5 V22" fill="none" stroke="#7C94B4" stroke-width="1"/></svg>
<div class="t" style="left:189px;top:101px;">Contacts</div>
<svg class="a" style="left:259px;top:96px" width="58" height="22" viewBox="0 0 58 22"><path d="M2 22 V7.2 L7.2 2 H57 V22 Z" fill="#FB9A48"/><path d="M1.5 22 V6.9 L6.9 1.5 H57.0" fill="none" stroke="#fff" stroke-width="1"/><path d="M0.5 22 V6.5 L6.5 0.5 H57.5 V22" fill="none" stroke="#7C94B4" stroke-width="1"/></svg>
<div class="t" style="left:265px;top:101px;">Event</div>
<svg class="a" style="left:316px;top:96px" width="61" height="22" viewBox="0 0 61 22"><path d="M2 22 V7.2 L7.2 2 H60 V22 Z" fill="#FB9A48"/><path d="M1.5 22 V6.9 L6.9 1.5 H60.0" fill="none" stroke="#fff" stroke-width="1"/><path d="M0.5 22 V6.5 L6.5 0.5 H60.5 V22" fill="none" stroke="#7C94B4" stroke-width="1"/></svg>
<div class="t" style="left:322px;top:101px;">Dates</div>
<svg class="a" style="left:376px;top:96px" width="87" height="22" viewBox="0 0 87 22"><path d="M2 22 V7.2 L7.2 2 H86 V22 Z" fill="#FB9A48"/><path d="M1.5 22 V6.9 L6.9 1.5 H86.0" fill="none" stroke="#fff" stroke-width="1"/><path d="M0.5 22 V6.5 L6.5 0.5 H86.5 V22" fill="none" stroke="#7C94B4" stroke-width="1"/></svg>
<div class="t" style="left:382px;top:101px;">Schedules</div>
<svg class="a" style="left:462px;top:96px" width="77" height="22" viewBox="0 0 77 22"><path d="M2 22 V7.2 L7.2 2 H76 V22 Z" fill="#FB9A48"/><path d="M1.5 22 V6.9 L6.9 1.5 H76.0" fill="none" stroke="#fff" stroke-width="1"/><path d="M0.5 22 V6.5 L6.5 0.5 H76.5 V22" fill="none" stroke="#7C94B4" stroke-width="1"/></svg>
<div class="t" style="left:468px;top:101px;">Shipping</div>
<svg class="a" style="left:538px;top:96px" width="65" height="22" viewBox="0 0 65 22"><path d="M2 22 V7.2 L7.2 2 H64 V22 Z" fill="#FB9A48"/><path d="M1.5 22 V6.9 L6.9 1.5 H64.0" fill="none" stroke="#fff" stroke-width="1"/><path d="M0.5 22 V6.5 L6.5 0.5 H64.5 V22" fill="none" stroke="#7C94B4" stroke-width="1"/></svg>
<div class="t" style="left:544px;top:101px;">Return</div>
<svg class="a" style="left:602px;top:96px" width="76" height="22" viewBox="0 0 76 22"><path d="M2 22 V7.2 L7.2 2 H75 V22 Z" fill="#FB9A48"/><path d="M1.5 22 V6.9 L6.9 1.5 H75.0" fill="none" stroke="#fff" stroke-width="1"/><path d="M0.5 22 V6.5 L6.5 0.5 H75.5 V22" fill="none" stroke="#7C94B4" stroke-width="1"/></svg>
<div class="t" style="left:608px;top:101px;">Payment</div>
<svg class="a" style="left:677px;top:96px" width="67" height="22" viewBox="0 0 67 22"><path d="M2 22 V7.2 L7.2 2 H66 V22 Z" fill="#FB9A48"/><path d="M1.5 22 V6.9 L6.9 1.5 H66.0" fill="none" stroke="#fff" stroke-width="1"/><path d="M0.5 22 V6.5 L6.5 0.5 H66.5 V22" fill="none" stroke="#7C94B4" stroke-width="1"/></svg>
<div class="t" style="left:683px;top:101px;">Default</div>
<svg class="a" style="left:743px;top:96px" width="54" height="22" viewBox="0 0 54 22"><path d="M2 22 V7.2 L7.2 2 H53 V22 Z" fill="#C54B2C"/><path d="M1.5 22 V6.9 L6.9 1.5 H53.0" fill="none" stroke="#fff" stroke-width="1"/><path d="M0.5 22 V6.5 L6.5 0.5 H53.5 V22" fill="none" stroke="#4C7CD4" stroke-width="1"/></svg>
<div class="t b" style="left:748px;top:101px;color:#fff">Cost</div>
<svg class="a" style="left:796px;top:96px" width="80" height="22" viewBox="0 0 80 22"><path d="M2 22 V7.2 L7.2 2 H79 V22 Z" fill="#FB9A48"/><path d="M1.5 22 V6.9 L6.9 1.5 H79.0" fill="none" stroke="#fff" stroke-width="1"/><path d="M0.5 22 V6.5 L6.5 0.5 H79.5 V22" fill="none" stroke="#7C94B4" stroke-width="1"/></svg>
<div class="t" style="left:802px;top:101px;">Sub Total</div>
<svg class="a" style="left:875px;top:96px" width="63" height="22" viewBox="0 0 63 22"><path d="M2 22 V7.2 L7.2 2 H62 V22 Z" fill="#FB9A48"/><path d="M1.5 22 V6.9 L6.9 1.5 H62.0" fill="none" stroke="#fff" stroke-width="1"/><path d="M0.5 22 V6.5 L6.5 0.5 H62.5 V22" fill="none" stroke="#7C94B4" stroke-width="1"/></svg>
<div class="t" style="left:881px;top:101px;">Status</div>
<svg class="a" style="left:937px;top:96px" width="106" height="22" viewBox="0 0 106 22"><path d="M2 22 V7.2 L7.2 2 H105 V22 Z" fill="#FB9A48"/><path d="M1.5 22 V6.9 L6.9 1.5 H105.0" fill="none" stroke="#fff" stroke-width="1"/><path d="M0.5 22 V6.5 L6.5 0.5 H105.5 V22" fill="none" stroke="#7C94B4" stroke-width="1"/></svg>
<div class="t" style="left:943px;top:101px;">Flat Discounts</div>
<div class="a" style="left:744px;top:118px;width:52px;height:2px;background:#C9DCF4"></div>
<div class="a" style="left:19px;top:129px;width:89px;height:23px;border:1px solid #ADADAD;background:#fff"></div>
<div class="t" style="left:19px;top:135px;width:89px;text-align:center">Refresh</div>
<div class="t b" style="left:116px;top:130px">Equipment</div>
<div class="t b" style="left:210px;top:130px">Sale</div>
<div class="t b" style="left:299px;top:130px">Misc.</div>
<div class="t b" style="left:389px;top:130px">Labor</div>
<div class="t b" style="left:479px;top:130px">Freight</div>
<div class="t b" style="left:568px;top:130px">Total</div>
<div class="t b" style="left:660px;top:130px">SubRent</div>
<div class="a" style="left:349px;top:124px;width:29px;height:24px;border:1px solid #B4B4B4;background:#fff"></div>
<svg class="a" style="left:355px;top:127px" width="18" height="18" viewBox="0 0 18 18"><defs><radialGradient id="gl349" cx="0.35" cy="0.3" r="0.8"><stop offset="0" stop-color="#F4FBFF"/><stop offset="1" stop-color="#9CD2FA"/></radialGradient></defs><path d="M10.6 10.8 L15.8 16" stroke="#6E6258" stroke-width="3" stroke-linecap="round"/><path d="M11.6 11.4 L15.6 15.4" stroke="#EE9434" stroke-width="1.6" stroke-linecap="round"/><circle cx="7" cy="7" r="5" fill="url(#gl349)" stroke="#86A6CE" stroke-width="1.5"/></svg>
<div class="a" style="left:437px;top:124px;width:29px;height:24px;border:1px solid #B4B4B4;background:#fff"></div>
<svg class="a" style="left:443px;top:127px" width="18" height="18" viewBox="0 0 18 18"><defs><radialGradient id="gl437" cx="0.35" cy="0.3" r="0.8"><stop offset="0" stop-color="#F4FBFF"/><stop offset="1" stop-color="#9CD2FA"/></radialGradient></defs><path d="M10.6 10.8 L15.8 16" stroke="#6E6258" stroke-width="3" stroke-linecap="round"/><path d="M11.6 11.4 L15.6 15.4" stroke="#EE9434" stroke-width="1.6" stroke-linecap="round"/><circle cx="7" cy="7" r="5" fill="url(#gl437)" stroke="#86A6CE" stroke-width="1.5"/></svg>
<div class="t b" style="left:19px;top:155px">Quoted</div>
<div class="cell" style="left:114px;top:149px"></div><div class="t" style="left:115px;top:154px;">0.00</div>
<div class="cell" style="left:204px;top:149px"></div><div class="t" style="left:205px;top:154px;">0.00</div>
<div class="cell" style="left:294px;top:149px"></div><div class="t" style="left:295px;top:154px;">0.00</div>
<div class="cell" style="left:384px;top:149px"></div><div class="t" style="left:385px;top:154px;">0.00</div>
<div class="cell" style="left:474px;top:149px"></div><div class="t" style="left:475px;top:154px;">0.00</div>
<div class="cell" style="left:564px;top:149px"></div><div class="t" style="left:565px;top:154px;">0.00</div>
<div class="cell" style="left:654px;top:149px"></div><div class="t" style="left:655px;top:154px;">0.00</div>
<div class="t b" style="left:19px;top:177px">Charge</div>
<div class="cell" style="left:114px;top:171px"></div><div class="t" style="left:115px;top:176px;">0.00</div>
<div class="cell" style="left:204px;top:171px"></div><div class="t" style="left:205px;top:176px;">0.00</div>
<div class="cell" style="left:294px;top:171px"></div><div class="t" style="left:295px;top:176px;">0.00</div>
<div class="cell" style="left:384px;top:171px"></div><div class="t" style="left:385px;top:176px;">100.00</div>
<div class="cell" style="left:474px;top:171px"></div><div class="t" style="left:475px;top:176px;">0.00</div>
<div class="cell" style="left:564px;top:171px"></div><div class="t" style="left:565px;top:176px;">100.00</div>
<div class="cell" style="left:654px;top:171px"></div><div class="t" style="left:655px;top:176px;">0.00</div>
<div class="t b" style="left:19px;top:199px">Discount</div>
<div class="cell" style="left:114px;top:193px"></div><div class="t" style="left:115px;top:198px;">0.00</div>
<div class="cell" style="left:204px;top:193px"></div><div class="t" style="left:205px;top:198px;">0.00</div>
<div class="cell" style="left:294px;top:193px"></div><div class="t" style="left:295px;top:198px;">0.00</div>
<div class="cell" style="left:384px;top:193px"></div><div class="t" style="left:385px;top:198px;">0.00</div>
<div class="cell" style="left:474px;top:193px"></div><div class="t" style="left:475px;top:198px;">0.00</div>
<div class="cell" style="left:564px;top:193px"></div><div class="t" style="left:565px;top:198px;">0.00</div>
<div class="cell" style="left:654px;top:193px"></div><div class="t" style="left:655px;top:198px;">0.00</div>
<div class="t b" style="left:19px;top:221px">Dark Days Disc.</div>
<div class="cell" style="left:114px;top:215px"></div><div class="t" style="left:115px;top:220px;">0.00</div>
<div class="cell" style="left:204px;top:215px"></div><div class="t" style="left:205px;top:220px;">0.00</div>
<div class="cell" style="left:294px;top:215px"></div><div class="t" style="left:295px;top:220px;">0.00</div>
<div class="cell" style="left:384px;top:215px"></div><div class="t" style="left:385px;top:220px;">0.00</div>
<div class="cell" style="left:474px;top:215px"></div><div class="t" style="left:475px;top:220px;">0.00</div>
<div class="cell" style="left:564px;top:215px"></div><div class="t" style="left:565px;top:220px;">0.00</div>
<div class="cell" style="left:654px;top:215px"></div><div class="t" style="left:655px;top:220px;">0.00</div>
<div class="t b" style="left:19px;top:243px">Total Disc.</div>
<div class="cell" style="left:114px;top:237px"></div><div class="t" style="left:115px;top:242px;font-size:10px;">0 (0%)</div>
<div class="cell" style="left:204px;top:237px"></div><div class="t" style="left:205px;top:242px;font-size:10px;">0 (0%)</div>
<div class="cell" style="left:294px;top:237px"></div><div class="t" style="left:295px;top:242px;font-size:10px;">0 (0%)</div>
<div class="cell" style="left:384px;top:237px"></div><div class="t" style="left:385px;top:242px;font-size:10px;">0 (0%)</div>
<div class="cell" style="left:474px;top:237px"></div><div class="t" style="left:475px;top:242px;font-size:10px;">0 (0%)</div>
<div class="cell" style="left:564px;top:237px"></div><div class="t" style="left:565px;top:242px;font-size:10px;">0 (0%)</div>
<div class="cell" style="left:654px;top:237px"></div><div class="t b" style="left:655px;top:242px;font-size:10px;">0 (0%)</div>
<div class="t b" style="left:19px;top:265px">MB Disc</div>
<div class="cell" style="left:114px;top:259px"></div><div class="t" style="left:115px;top:264px;font-size:10px;">0.00</div>
<div class="cell" style="left:204px;top:259px"></div><div class="t" style="left:205px;top:264px;font-size:10px;">0.00</div>
<div class="cell" style="left:294px;top:259px"></div><div class="t" style="left:295px;top:264px;font-size:10px;">0.00</div>
<div class="cell" style="left:384px;top:259px"></div><div class="t" style="left:385px;top:264px;font-size:10px;">0.00</div>
<div class="cell" style="left:474px;top:259px"></div><div class="t" style="left:475px;top:264px;font-size:10px;">0.00</div>
<div class="cell" style="left:564px;top:259px"></div><div class="t" style="left:565px;top:264px;font-size:10px;">0.00</div>
<div class="cell" style="left:654px;top:259px"></div><div class="t" style="left:655px;top:264px;font-size:10px;">0.00</div>
<div class="t b" style="left:19px;top:287px">Cost</div>
<div class="cell" style="left:114px;top:281px"></div><div class="t" style="left:115px;top:286px;">0.00</div>
<div class="cell" style="left:204px;top:281px"></div><div class="t" style="left:205px;top:286px;">0.00</div>
<div class="cell" style="left:294px;top:281px"></div><div class="t" style="left:295px;top:286px;">0.00</div>
<div class="cell" style="left:384px;top:281px"></div><div class="t" style="left:385px;top:286px;">50.00</div>
<div class="cell" style="left:474px;top:281px"></div><div class="t" style="left:475px;top:286px;">0.00</div>
<div class="cell" style="left:564px;top:281px"></div><div class="t" style="left:565px;top:286px;">50.00</div>
<div class="cell" style="left:654px;top:281px"></div><div class="t" style="left:655px;top:286px;">0.00</div>
<div class="t b" style="left:19px;top:309px">Profit (Margin)</div>
<div class="cell" style="left:114px;top:303px"></div><div class="t" style="left:115px;top:308px;font-size:10px;">0 (0%)</div>
<div class="cell" style="left:204px;top:303px"></div><div class="t" style="left:205px;top:308px;font-size:10px;">0 (0%)</div>
<div class="cell" style="left:294px;top:303px"></div><div class="t" style="left:295px;top:308px;font-size:10px;">0 (0%)</div>
<div class="cell" style="left:384px;top:303px"></div><div class="t" style="left:385px;top:308px;font-size:10px;">50 (50%)</div>
<div class="cell" style="left:474px;top:303px"></div><div class="t" style="left:475px;top:308px;font-size:10px;">0 (0%)</div>
<div class="cell" style="left:564px;top:303px"></div><div class="t" style="left:565px;top:308px;font-size:10px;">50 (50%)</div>
<div class="cell" style="left:654px;top:303px"></div><div class="t" style="left:655px;top:308px;font-size:10px;">0 (0%)</div>
<div class="t" style="left:794px;top:140px">Currency</div>
<div class="a" style="left:854px;top:134px;width:100px;height:24px;border:1px solid #7A8A99;background:#E9EAEE;box-shadow:inset 0 0 0 1px #C5D3E3"></div>
<div class="a" style="left:934px;top:135px;width:19px;height:22px;border-left:1px solid #7A8A99;background:linear-gradient(#fff,#D7E3F2)"></div>
<svg class="a" style="left:938px;top:143px" width="12" height="7" viewBox="0 0 12 7"><path d="M1 1 H11 L6 6 Z" fill="#222"/></svg>
<div class="t" style="left:857px;top:139px">Transaction</div>
<div class="a" style="left:796px;top:164px;width:159px;height:23px;border:1px solid #B0B0B0;background:#fff"></div>
<div class="t" style="left:796px;top:170px;width:159px;text-align:center;color:#A2A2A2">Distribute Revenue</div>
<div class="a" style="left:766px;top:201px;width:235px;height:115px;border:1px solid #B8B8B8"></div>
<div class="t b" style="left:771px;top:196px;background:#fff;padding:0 2px">Compare With Actual Price</div>
<div class="t" style="left:774px;top:221px">Difference Amt</div>
<div class="t" style="left:774px;top:251px">% Of Difference</div>
<div class="fld" style="left:876px;top:216px;width:110px;height:24px"></div>
<div class="fld" style="left:876px;top:246px;width:110px;height:24px"></div>
<div class="a" style="left:886px;top:281px;width:89px;height:23px;border:1px solid #ADADAD;background:#fff"></div>
<div class="t" style="left:886px;top:287px;width:89px;text-align:center">C<u>a</u>lculate</div>
<svg class="a" style="left:950px;top:75px" width="125" height="125" viewBox="950 75 125 125"><rect x="958" y="134.5" width="107" height="56.5" rx="5" fill="#fff" stroke="#C2141F" stroke-width="1.9"/><path d="M1002.4 135.5 H1021.4" stroke="#fff" stroke-width="2.4"/><path d="M1001.5 135 L997 81 L1022.5 135" fill="none" stroke="#C2141F" stroke-width="1.9" stroke-linejoin="round"/><path d="M997 80.6 L998.4 93 L1003 93 Z" fill="#C2141F"/></svg>
<div class="t b" style="left:956px;top:147px;width:107px;text-align:center;line-height:15px;font-size:11.6px;letter-spacing:0">Labor Planning<br>Button</div>
<div class="a" style="left:8px;top:356px;width:1069px;height:315px;background:#C9DCF4;border:1px solid;border-color:#6A8CD0 #7088A8 #7088A8 #6A8CD0"></div>
<div class="a" style="left:9px;top:357px;width:1067px;height:1px;background:#fff"></div>
<div class="a" style="left:10px;top:360px;width:1063px;height:307px;background:#fff;border:1px solid #ABABAB"></div>
<div class="a" style="left:11px;top:667px;width:1062px;height:1px;background:#fff"></div>
<svg class="a" style="left:10px;top:334px" width="67" height="22" viewBox="0 0 67 22"><path d="M2 22 V7.2 L7.2 2 H66 V22 Z" fill="#FB9A48"/><path d="M1.5 22 V6.9 L6.9 1.5 H66.0" fill="none" stroke="#fff" stroke-width="1"/><path d="M0.5 22 V6.5 L6.5 0.5 H66.5 V22" fill="none" stroke="#7C94B4" stroke-width="1"/></svg>
<div class="t" style="left:16px;top:339px;">Item(s)</div>
<svg class="a" style="left:76px;top:334px" width="59" height="22" viewBox="0 0 59 22"><path d="M2 22 V7.2 L7.2 2 H58 V22 Z" fill="#C54B2C"/><path d="M1.5 22 V6.9 L6.9 1.5 H58.0" fill="none" stroke="#fff" stroke-width="1"/><path d="M0.5 22 V6.5 L6.5 0.5 H58.5 V22" fill="none" stroke="#4C7CD4" stroke-width="1"/></svg>
<div class="t b" style="left:81px;top:339px;color:#fff">Labor</div>
<div class="a" style="left:77px;top:356px;width:57px;height:2px;background:#C9DCF4"></div>
<div class="a" style="left:12px;top:362px;width:1px;height:303px;background:#6F7F92"></div>
<div class="a" style="left:12px;top:664px;width:1060px;height:1px;background:#7088A0"></div>
<div class="a" style="left:12px;top:362px;width:1060px;height:1px;background:#8E3519"></div>
<div class="hd" style="left:12px;width:16px;padding-left:1px">T</div>
<div class="hd" style="left:28px;width:15px">C</div>
<div class="hd" style="left:43px;width:15px">L</div>
<div class="hd" style="left:58px;width:60px">Action</div>
<div class="hd" style="left:118px;width:80px">Labor Id</div>
<div class="hd" style="left:198px;width:260px">Description</div>
<div class="hd" style="left:458px;width:50px">Qty</div>
<div class="hd" style="left:508px;width:142px">Tasks</div>
<div class="hd" style="left:650px;width:120px">Site Regular Rate</div>
<div class="hd" style="left:770px;width:80px">Regular Rate</div>
<div class="hd" style="left:850px;width:80px">Site OT Rate</div>
<div class="hd" style="left:930px;width:60px">OT Rate</div>
<div class="hd" style="left:990px;width:81px">Site DT Rate</div>
<div class="a" style="left:13px;top:383px;width:1057px;height:19px;background:#FB9A48;border-bottom:1px solid #D28A56"></div>
<div class="a" style="left:1070px;top:383px;width:1px;height:282px;background:#7088A0"></div>
<div class="a" style="left:27px;top:383px;width:1px;height:19px;background:#D08C5C"></div>
<div class="a" style="left:42px;top:383px;width:1px;height:19px;background:#D08C5C"></div>
<div class="a" style="left:57px;top:383px;width:1px;height:19px;background:#D08C5C"></div>
<div class="a" style="left:117px;top:383px;width:1px;height:19px;background:#D08C5C"></div>
<div class="a" style="left:197px;top:383px;width:1px;height:19px;background:#D08C5C"></div>
<div class="a" style="left:457px;top:383px;width:1px;height:19px;background:#D08C5C"></div>
<div class="a" style="left:507px;top:383px;width:1px;height:19px;background:#D08C5C"></div>
<div class="a" style="left:649px;top:383px;width:1px;height:19px;background:#D08C5C"></div>
<div class="a" style="left:769px;top:383px;width:1px;height:19px;background:#D08C5C"></div>
<div class="a" style="left:849px;top:383px;width:1px;height:19px;background:#D08C5C"></div>
<div class="a" style="left:929px;top:383px;width:1px;height:19px;background:#D08C5C"></div>
<div class="a" style="left:989px;top:383px;width:1px;height:19px;background:#D08C5C"></div>
<div class="a" style="left:14px;top:386px;width:13px;height:13px;border:1px solid #8A98A8;background:linear-gradient(135deg,#fff 12%,#F9B47C 50%,#F08A38);box-shadow:inset 0 0 0 1px #fff"></div>
<div class="a" style="left:29px;top:386px;width:13px;height:13px;border:1px solid #8A98A8;background:linear-gradient(135deg,#fff 12%,#F9B47C 50%,#F08A38);box-shadow:inset 0 0 0 1px #fff"></div>
<div class="a" style="left:44px;top:386px;width:13px;height:13px;border:1px solid #8A98A8;background:linear-gradient(135deg,#fff 12%,#F9B47C 50%,#F08A38);box-shadow:inset 0 0 0 1px #fff"></div>
<svg class="a" style="left:14px;top:386px" width="13" height="13" viewBox="14 386 13 13"><path d="M16.8 392 L18.9 395.6 L23.9 389" stroke="#1A1A1A" stroke-width="1.9" fill="none"/></svg>
<div class="t" style="left:59px;top:386px">Rent</div>
<div class="a" style="left:118px;top:383px;width:79px;height:18px;border:1px solid #F01808"></div>
<div class="t" style="left:120px;top:386px;letter-spacing:-0.15px">AUDIOASSI...</div>
<div class="t" style="left:199px;top:386px;letter-spacing:-0.16px">AUDIO ASSISTANT</div>
<div class="t" style="left:458px;top:386px;width:47px;text-align:right">1</div>
<div class="t" style="left:650px;top:386px;width:118px;text-align:right">100.00</div>
<div class="t" style="left:770px;top:386px;width:78px;text-align:right">100.00</div>
<div class="a" style="left:13px;top:647px;width:1057px;height:16px;background:#EEEEEE;border-top:1px solid #7088A0;border-bottom:1px solid #7088A0"></div>
<div class="a" style="left:13px;top:663px;width:1040px;height:1px;background:#B8D0EC"></div>
<div class="a" style="left:13px;top:647px;width:15px;height:16px;background:#EEEEEE;border:1px solid #7088A0;border-left-color:#fff;box-shadow:inset 0 1px 0 #fff"></div>
<svg class="a" style="left:18px;top:651px" width="6" height="9" viewBox="0 0 6 9"><path d="M5.5 0.3 V8.7 L0.6 4.5 Z" fill="#222"/></svg>
<div class="a" style="left:1053px;top:647px;width:16px;height:16px;background:#EEEEEE;border:1px solid #7088A0"></div>
<svg class="a" style="left:1059px;top:651px" width="6" height="9" viewBox="0 0 6 9"><path d="M0.5 0.3 V8.7 L5.4 4.5 Z" fill="#222"/></svg>
<div class="a" style="left:28px;top:647px;width:588px;height:16px;background:linear-gradient(#F3C4A2,#EA9A68);border:1px solid #FFC000;box-shadow:inset 0 0 0 1px #F3A860"></div>
<div class="a" style="left:319px;top:652px;width:5px;height:7px;background:repeating-linear-gradient(90deg,#8A7A70 0 1px,transparent 1px 2px)"></div>
<div class="t b" style="left:70px;top:678px;font-size:14px;line-height:16px;letter-spacing:0.15px">Items</div>
<div class="fld" style="left:120px;top:673px;width:100px;height:24px"></div>
<div class="t b" style="left:121px;top:677px;font-size:14px;line-height:16px;letter-spacing:0.15px">$</div>
<div class="t b" style="left:235px;top:678px;font-size:14px;line-height:16px;letter-spacing:0.15px">Labor</div>
<div class="fld" style="left:287px;top:673px;width:100px;height:24px"></div>
<div class="t b" style="left:288px;top:677px;font-size:14px;line-height:16px;letter-spacing:0.15px">$ 100.00</div>
<div class="t b" style="left:446px;top:678px;font-size:14px;line-height:16px;letter-spacing:0.15px">Sub Total</div>
<div class="fld" style="left:525px;top:673px;width:100px;height:24px"></div>
<div class="t b" style="left:526px;top:677px;font-size:14px;line-height:16px;letter-spacing:0.15px">$ 100.00</div>
<div class="t b" style="left:636px;top:678px;font-size:14px;line-height:16px;letter-spacing:0.15px">Tax</div>
<div class="fld" style="left:670px;top:673px;width:100px;height:24px"></div>
<div class="t b" style="left:671px;top:677px;font-size:14px;line-height:16px;letter-spacing:0.15px">$</div>
<div class="a" style="left:813px;top:673px;width:89px;height:23px;border:1px solid #C0C0C0;background:#fff"></div>
<div class="t b" style="left:813px;top:678px;width:89px;text-align:center;font-size:14px;line-height:16px;letter-spacing:0.15px">Total</div>
<div class="fld" style="left:906px;top:673px;width:100px;height:24px"></div>
<div class="t b" style="left:907px;top:677px;font-size:14px;line-height:16px;letter-spacing:0.15px">$ 100.00</div>
<div class="a" style="left:8px;top:707px;width:1069px;height:24px;border-top:1px solid #C6C6C6;border-left:1px solid #C6C6C6;border-bottom:1px solid #C9C9C9;border-right:1px solid #C9C9C9;background:#fff;box-shadow:inset 1px 1px 0 #727272"></div>
</body></html>
